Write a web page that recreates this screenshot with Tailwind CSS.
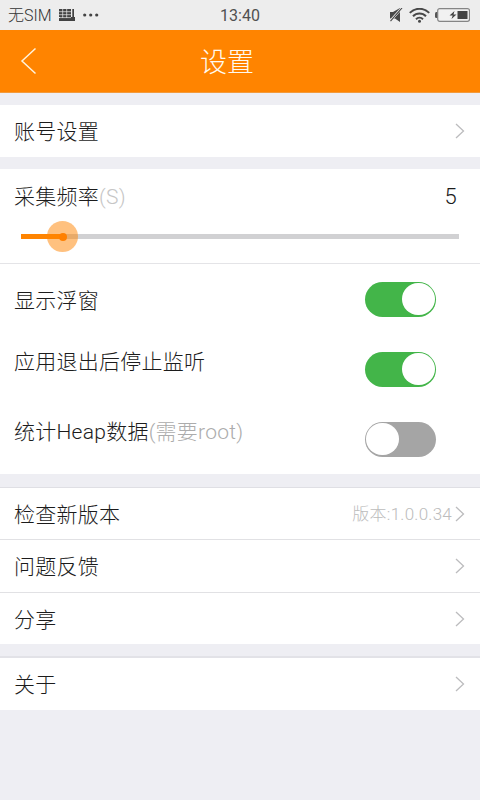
<!DOCTYPE html>
<html lang="zh-CN">
<head>
<meta charset="utf-8">
<title>设置</title>
<script src="https://cdn.jsdelivr.net/npm/@tailwindcss/browser@4"></script>
</head>
<body class="w-[480px] h-[800px] overflow-hidden bg-[#eeeef3] text-[#1c1c1c] font-['Roboto','Noto_Sans_CJK_SC',sans-serif] font-light text-[21px] leading-[30px] tracking-[0.25px]">
<svg class="hidden"><symbol id="chev" viewBox="0 0 10 16"><path d="M1 1l7.500 7L1 15" fill="none" stroke="#bcbcbe" stroke-width="1.3"/></symbol></svg>
<div class="h-[30px] bg-[#ededed] grid grid-cols-3 items-center text-[#505050] text-[16px] font-normal leading-[28px] tracking-normal">
  <div class="flex items-center pl-[8px]">
    <span class="w-[51px] pt-[2px] whitespace-nowrap font-light text-[#333]">无SIM</span>
    <svg class="w-[16px] h-[12px]" viewBox="0 0 16 12"><path d="M0 0h12v8h1.300V0H15v8h1v4H0V9h1V8H0z" fill="#424242"/><path d="M0 2.700h12M0 5.700h12M0 8.600h12M3.700 0v9M7.700 0v9" stroke="#ededed" stroke-width=".7"/></svg>
    <svg class="ml-[8px] w-[16px] h-[4px]" viewBox="0 0 16 4" fill="#444"><circle cx="1.7" cy="2" r="1.6"/><circle cx="7.7" cy="2" r="1.6"/><circle cx="13.7" cy="2" r="1.6"/></svg>
  </div>
  <div class="text-center pt-[2px]">13:40</div>
  <div class="flex items-center justify-end pr-[10px]">
    <svg class="w-[13px] h-[14px] mr-[6px]" viewBox="0 0 13 14"><path d="M0 4h3L10 0v14L5 10.500H0z" fill="#484848"/><path d="M0 12.500L11.500-.5" stroke="#ededed" stroke-width="1.200"/><path d="M1 13.500L12.500.5" stroke="#ededed" stroke-width="1"/><path d="M.5 13.200L12 0" stroke="#484848" stroke-width="1.100"/></svg>
    <svg class="w-[21px] h-[15px] mr-[5px]" viewBox="0 0 21 15" fill="none" stroke="#484848" stroke-width="2"><path d="M.8 4.900a13.500 13.500 0 0 1 19.400 0M4 8.200a9 9 0 0 1 13 0M7 11.200a5 5 0 0 1 7 0"/><circle cx="10.500" cy="13.300" r="1.500" fill="#484848" stroke="none"/></svg>
    <svg class="w-[35px] h-[14px]" viewBox="0 0 35 14"><rect x="2.700" y=".7" width="31.800" height="12.600" rx="2" fill="#f1f1f1" stroke="#858585" stroke-width="1.200"/><path d="M2.200 4H1.300Q0 4 0 5.500v3Q0 10 1.300 10h.9z" fill="#555"/><rect x="22.500" y="3" width="10" height="8" fill="#444"/><path d="M19.500 3l-5 4.500h3.200L16.500 11l5-4.500h-3z" fill="#444"/></svg>
  </div>
</div>
<div class="h-[63px] bg-[#ff8400] border-b border-[#f29a3c] grid grid-cols-3 items-center text-white">
  <svg class="ml-[20px] w-[18px] h-[28px]" viewBox="0 0 18 28"><path d="M15.500 1.500L2 14l13.500 12.500" fill="none" stroke="#fff3dc" stroke-width="1.500"/></svg>
  <div class="text-center text-[27px] leading-[40px] pr-[26px] pt-[3px] tracking-normal text-[#fffaf0]">设置</div>
</div>

<div class="mt-[12px] h-[52px] bg-white flex items-center justify-between pl-[14px] pr-[15px]">
  <span class="pt-[2px]">账号设置</span><svg class="w-[10px] h-[16px]"><use href="#chev"/></svg>
</div>

<div class="mt-[12px] h-[305px] bg-white">
  <div class="h-[95px] border-b border-[#e4e4e7] pt-[13px]">
    <div class="flex justify-between pl-[14px] pr-[23px]"><span>采集频率<span class="text-[#c6c6c6]">(S)</span></span><span class="text-[22px]">5</span></div>
    <div class="relative mt-[22px] mx-[21px] h-[5px] bg-[#d1d1d3]">
      <div class="w-[41px] h-[5px] bg-[#ff8400]"></div>
      <div class="absolute left-[26px] -top-[13px] w-[31px] h-[31px] rounded-full bg-[#ff8400]/50 flex items-center justify-center"><div class="w-[8px] h-[8px] rounded-full bg-[#ff8000]"></div></div>
    </div>
  </div>
  <div class="h-[70px] flex items-center justify-between pl-[14px] pr-[44px]">
    <span class="pt-[3px]">显示浮窗</span>
    <div class="w-[71px] h-[35px] rounded-full bg-[#43b549] flex items-center justify-end px-[1px]"><div class="w-[33px] h-[32px] rounded-full bg-white"></div></div>
  </div>
  <div class="h-[70px] flex items-center justify-between pl-[14px] pr-[44px]">
    <span class="pb-[15px]">应用退出后停止监听</span>
    <div class="w-[71px] h-[35px] rounded-full bg-[#43b549] flex items-center justify-end px-[1px]"><div class="w-[33px] h-[32px] rounded-full bg-white"></div></div>
  </div>
  <div class="h-[70px] flex items-center justify-between pl-[14px] pr-[44px]">
    <span class="pb-[15px]">统计Heap数据<span class="text-[#acacac]">(需要root)</span></span>
    <div class="w-[71px] h-[35px] rounded-full bg-[#a5a5a5] flex items-center px-[1px]"><div class="w-[33px] h-[32px] rounded-full bg-white"></div></div>
  </div>
</div>

<div class="mt-[13px] bg-white border-t border-[#dfdfe4]">
  <div class="h-[52px] border-b border-[#e1e1e4] flex items-center justify-between pl-[14px] pr-[15px]"><span class="pt-[2px]">检查新版本</span>
    <div class="flex items-center"><span class="text-[17px] text-[#bcbcbc] mr-[3px]">版本:1.0.0.34</span><svg class="w-[10px] h-[16px]"><use href="#chev"/></svg></div></div>
  <div class="h-[53px] border-b border-[#e1e1e4] flex items-center justify-between pl-[14px] pr-[15px]"><span class="pt-[2px]">问题反馈</span><svg class="w-[10px] h-[16px]"><use href="#chev"/></svg></div>
  <div class="h-[51px] flex items-center justify-between pl-[14px] pr-[15px]"><span class="pt-[2px]">分享</span><svg class="w-[10px] h-[16px]"><use href="#chev"/></svg></div>
</div>
<div class="mt-[12px] h-[54px] bg-white border-t-2 border-[#e2e2e7] flex items-center justify-between pl-[14px] pr-[15px]"><span class="pt-[2px]">关于</span><svg class="w-[10px] h-[16px]"><use href="#chev"/></svg></div>
</body>
</html>
